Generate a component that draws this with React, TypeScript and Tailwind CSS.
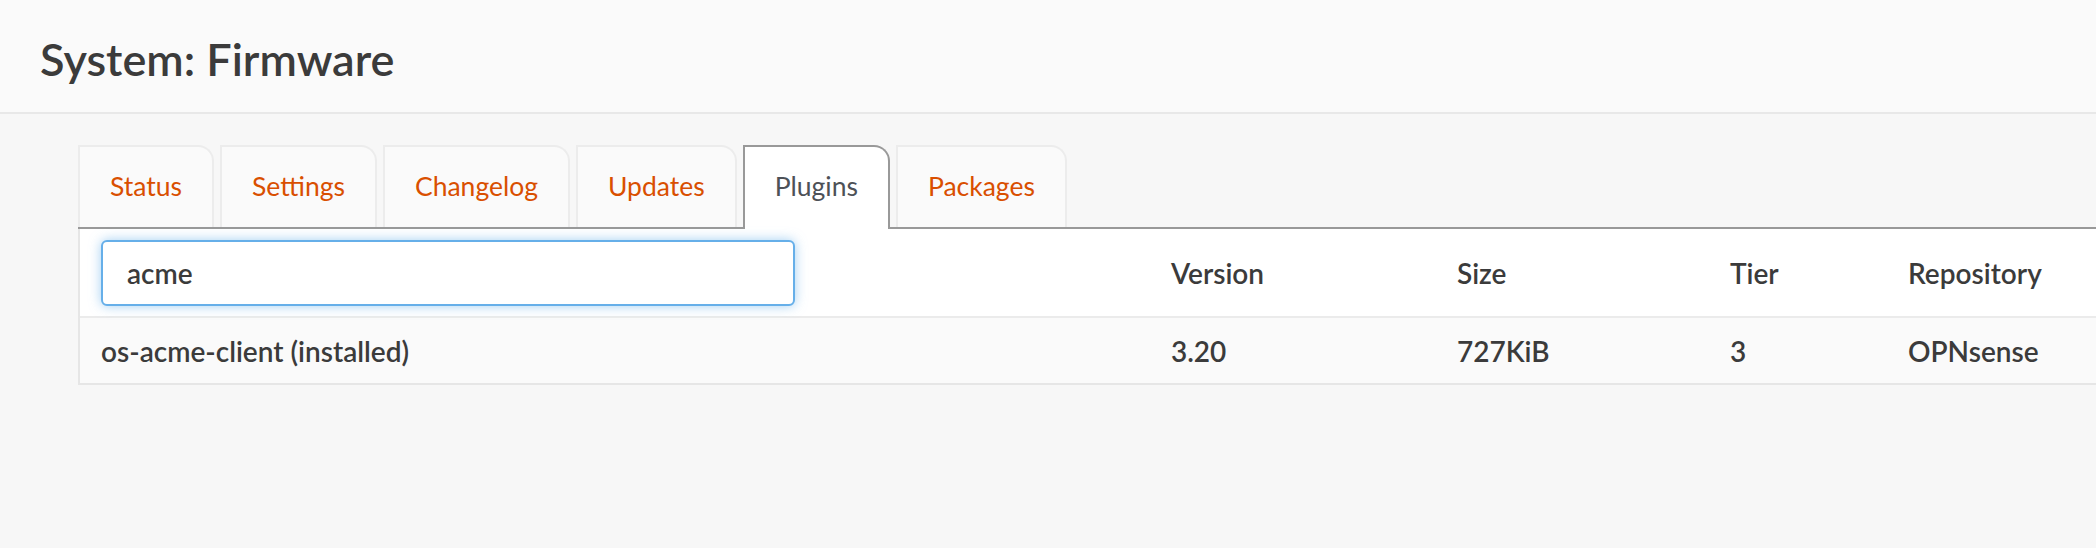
import React from 'react';

const tabs = ['Status', 'Settings', 'Changelog', 'Updates', 'Plugins', 'Packages'];

const columns = ['Version', 'Size', 'Tier', 'Repository'];

const plugins = [
    { name: 'os-acme-client (installed)', version: '3.20', size: '727KiB', tier: '3', repository: 'OPNsense' },
];

export default function App() {
    const active = 'Plugins';

    return (
        <div className="min-h-[548px] bg-[#f7f7f7] font-['Lato',sans-serif] text-[#3b3b3b]">
            {/* Page head */}
            <div className="h-[114px] bg-[#fafafa] border-b-2 border-[#e8e8e8] flex items-center pl-[40px]">
                <h1 className="text-[45px] leading-none font-semibold pt-[6px]">System: Firmware</h1>
            </div>

            <div className="pl-[78px] pt-[31px]">
                {/* Tabs */}
                <ul className="flex gap-[6px] border-b-2 border-[#999999] h-[84px]">
                    {tabs.map((tab) =>
                        tab === active ? (
                            <li
                                key={tab}
                                className="h-[84px] px-[30px] flex items-center bg-white border-2 border-b-0 border-[#999999] rounded-tr-[16px] text-[26.5px] text-[#4d5157] pb-[2px]"
                            >
                                {tab}
                            </li>
                        ) : (
                            <li
                                key={tab}
                                className="h-[82px] px-[30px] flex items-center bg-[#fafafa] border-2 border-b-0 border-[#ececec] rounded-tr-[16px] text-[26.5px] text-[#d94f00]"
                            >
                                {tab}
                            </li>
                        )
                    )}
                </ul>

                {/* Plugin table */}
                <div className="bg-white border-l-2 border-[#e6e6e6]">
                    <div className="grid grid-cols-[1070px_286px_273px_178px_1fr] items-center h-[89px] border-b-2 border-[#ebebeb]">
                        <div className="px-[21px]">
                            <input
                                readOnly
                                value="acme"
                                className="w-[694px] h-[66px] border-2 border-[#66afe9] rounded-[6px] pl-[24px] text-[28px] font-semibold text-[#3b3b3b] outline-none shadow-[0_0_12px_rgba(102,175,233,0.6)] bg-white"
                            />
                        </div>
                        {columns.map((col) => (
                            <div key={col} className="px-[21px] text-[28px] font-semibold">
                                {col}
                            </div>
                        ))}
                    </div>
                    {plugins.map((p) => (
                        <div
                            key={p.name}
                            className="grid grid-cols-[1070px_286px_273px_178px_1fr] items-center h-[67px] bg-[#fafafa] border-b-2 border-[#e6e6e6] text-[28px] font-semibold"
                        >
                            <div className="px-[21px]">{p.name}</div>
                            <div className="px-[21px]">{p.version}</div>
                            <div className="px-[21px]">{p.size}</div>
                            <div className="px-[21px]">{p.tier}</div>
                            <div className="px-[21px]">{p.repository}</div>
                        </div>
                    ))}
                </div>
            </div>
        </div>
    );
}
